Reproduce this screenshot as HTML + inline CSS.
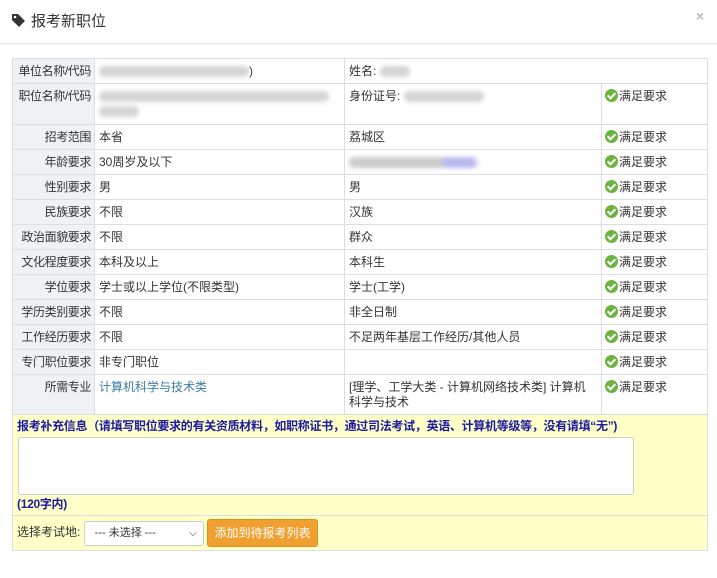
<!DOCTYPE html>
<html><head><meta charset="utf-8"><style>
*{box-sizing:border-box;margin:0;padding:0}
body{width:717px;height:578px;background:#fff;font-family:"Liberation Sans","Noto Sans CJK SC",sans-serif;font-size:12px;color:#333;position:relative;overflow:hidden}
.hd{position:absolute;left:0;top:0;width:717px;height:44px;border-bottom:1px solid #e5e5e5}
.hd .t{position:absolute;left:31px;top:10px;font-size:15px;color:#333}
.hd .x{position:absolute;left:696px;top:8px;font-size:14px;color:#bbb;font-weight:bold}
table{position:absolute;left:12px;top:58px;width:695px;border-collapse:collapse;table-layout:fixed}
td{border:1px solid #ddd;vertical-align:top;padding:5px 4px 0;line-height:15px;font-size:12px;overflow:hidden}
td.l{background:#eef2f4;text-align:right;padding:5px 3px 0 0;white-space:nowrap;letter-spacing:-0.4px}
.ok{color:#333;white-space:nowrap;padding-left:3px}
.ok i{display:inline-block;width:13px;height:13px;border-radius:50%;background:#6cb33f;vertical-align:-2px;margin-right:1px;position:relative}
.ok i:after{content:"";position:absolute;left:4px;top:2px;width:3px;height:6px;border:solid #fff;border-width:0 2px 2px 0;transform:rotate(45deg)}
.b{display:inline-block;height:11px;background:#d5d5d5;border-radius:5px;filter:blur(2px);vertical-align:middle}
a{color:#3a7ca5;text-decoration:none}
.y{background:#ffffc8}
</style></head><body>
<div class="hd"><svg style="position:absolute;left:11px;top:13px" width="15" height="15" viewBox="0 0 15 15"><path d="M1 1h6l7 7-6 6-7-7z" fill="#333"/><circle cx="4" cy="4" r="1.3" fill="#fff"/></svg><span class="t">报考新职位</span><span class="x">×</span></div>
<table>
<colgroup><col style="width:82px"><col style="width:250px"><col style="width:257px"><col style="width:106px"></colgroup>
<tr style="height:25px"><td class="l">单位名称/代码</td><td><span class="b" style="width:150px"></span>)</td><td colspan="2">姓名: <span class="b" style="width:30px"></span></td></tr>
<tr style="height:41px"><td class="l">职位名称/代码</td><td><span class="b" style="width:230px"></span><br><span class="b" style="width:40px"></span></td><td>身份证号: <span class="b" style="width:80px"></span></td><td class="ok"><i></i>满足要求</td></tr>
<tr style="height:25px"><td class="l">招考范围</td><td>本省</td><td>荔城区</td><td class="ok"><i></i>满足要求</td></tr>
<tr style="height:25px"><td class="l">年龄要求</td><td>30周岁及以下</td><td><span class="b" style="width:130px;background:linear-gradient(90deg,#ccc 70%,#b8b8f0 75%,#b8b8f0 95%,#eee)"></span></td><td class="ok"><i></i>满足要求</td></tr>
<tr style="height:25px"><td class="l">性别要求</td><td>男</td><td>男</td><td class="ok"><i></i>满足要求</td></tr>
<tr style="height:25px"><td class="l">民族要求</td><td>不限</td><td>汉族</td><td class="ok"><i></i>满足要求</td></tr>
<tr style="height:25px"><td class="l">政治面貌要求</td><td>不限</td><td>群众</td><td class="ok"><i></i>满足要求</td></tr>
<tr style="height:25px"><td class="l">文化程度要求</td><td>本科及以上</td><td>本科生</td><td class="ok"><i></i>满足要求</td></tr>
<tr style="height:25px"><td class="l">学位要求</td><td>学士或以上学位(不限类型)</td><td>学士(工学)</td><td class="ok"><i></i>满足要求</td></tr>
<tr style="height:25px"><td class="l">学历类别要求</td><td>不限</td><td>非全日制</td><td class="ok"><i></i>满足要求</td></tr>
<tr style="height:25px"><td class="l">工作经历要求</td><td>不限</td><td>不足两年基层工作经历/其他人员</td><td class="ok"><i></i>满足要求</td></tr>
<tr style="height:25px"><td class="l">专门职位要求</td><td>非专门职位</td><td></td><td class="ok"><i></i>满足要求</td></tr>
<tr style="height:40px"><td class="l">所需专业</td><td><a>计算机科学与技术类</a></td><td>[理学、工学大类 - 计算机网络技术类] 计算机科学与技术</td><td class="ok"><i></i>满足要求</td></tr>
<tr style="height:101px"><td colspan="4" class="y" style="padding:4px 4px 0;line-height:15px;color:#1a1aa0;font-weight:bold;letter-spacing:-0.3px">报考补充信息（请填写职位要求的有关资质材料，如职称证书，通过司法考试，英语、计算机等级等，没有请填“无”)
<div style="width:616px;height:58px;border:1px solid #ccc;border-radius:3px;background:#fff;margin:3px 0 2px 1px"></div>(120字内)</td></tr>
<tr style="height:35px"><td colspan="4" class="y" style="padding:3px 4px 0;line-height:26px">选择考试地: <span style="display:inline-block;vertical-align:middle;width:120px;height:25px;border:1px solid #ccc;border-radius:3px;background:#fff;font-size:11px;line-height:23px;padding-left:10px;position:relative">--- 未选择 ---<span style="position:absolute;right:6px;top:0;font-size:10px">&#9013;</span></span> <span style="display:inline-block;vertical-align:middle;width:111px;height:28px;background:#f0a030;border:1px solid #e09020;border-radius:3px;color:#fff;text-align:center;line-height:26px;font-size:12px">添加到待报考列表</span></td></tr>
</table>
</body></html>
